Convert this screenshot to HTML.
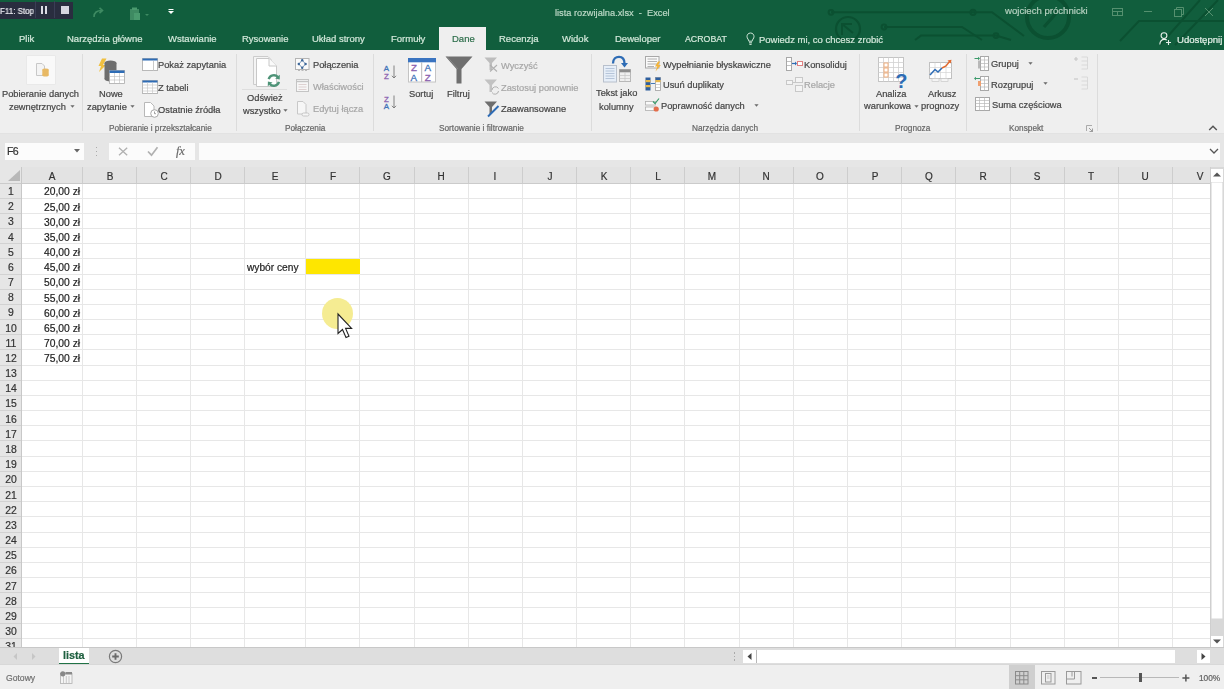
<!DOCTYPE html><html><head><meta charset="utf-8"><style>
html,body{margin:0;padding:0;}
body{width:1224px;height:689px;overflow:hidden;position:relative;background:#fff;font-family:"Liberation Sans", sans-serif;}
.t{position:absolute;white-space:nowrap;line-height:1;will-change:transform;-webkit-text-stroke:0.2px currentColor;}
.r{position:absolute;}
svg{position:absolute;overflow:visible;}
</style></head><body>
<div class="r" style="left:0px;top:0px;width:1224px;height:50px;background:#115e3d;"></div>
<svg style="left:0;top:0" width="1224" height="50" viewBox="0 0 1224 50">
<g stroke="#0b5031" stroke-width="2" fill="none">
<path d="M831 12.3 H992 L1024 36"/><circle cx="831" cy="12.3" r="2.4"/><circle cx="973" cy="12.3" r="2.6"/>
<path d="M884 27 H962 L982 40"/><circle cx="884" cy="27" r="2.4"/>
<path d="M915 40 L921 35.6 H996 L1011 40"/><circle cx="996" cy="35.6" r="2.4"/>
<circle cx="848" cy="29" r="12" stroke-width="2.2"/>
<path d="M842 35 V24 H852 M842 24 L853 33" stroke-width="2"/>
<circle cx="1048" cy="17" r="21" stroke-width="4"/>
<path d="M1037 11 H1058 L1044 27" stroke-width="3.2"/>
<path d="M1120 41 L1139 21 H1224"/>
<path d="M1218 0 L1175 45"/><path d="M1200 0 L1160 45"/>
</g></svg>
<div class="r" style="left:0px;top:1.5px;width:73px;height:17.5px;background:#292d3f;"></div>
<div class="r" style="left:35px;top:1px;width:1px;height:17px;background:#3a3f55;"></div>
<div class="r" style="left:54px;top:1px;width:1px;height:17px;background:#3a3f55;"></div>
<div class="t" style="left:-0.5px;top:6.72px;font-size:8.6px;color:#ececf2;font-weight:normal;transform:scaleX(0.93);transform-origin:0 0;">F11: Stop</div>
<div class="r" style="left:41px;top:6px;width:2.2px;height:7.5px;background:#dcdce6;"></div>
<div class="r" style="left:45px;top:6px;width:2.2px;height:7.5px;background:#dcdce6;"></div>
<div class="r" style="left:61px;top:6px;width:7.5px;height:7.5px;background:#d6d6e0;"></div>
<svg style="left:92px;top:7px" width="14" height="12" viewBox="0 0 14 12"><path d="M2 10 C2 5 5 3.5 10 3.5 M7.5 0.8 L10.5 3.5 L7.5 6.2" stroke="#3e8a62" stroke-width="1.6" fill="none"/></svg>
<svg style="left:129px;top:7px" width="24" height="14" viewBox="0 0 24 14"><rect x="1" y="2" width="9" height="11" fill="#3e8a62"/><rect x="5" y="6" width="6" height="7" fill="#4a9a6e"/><rect x="3" y="0.5" width="5" height="2.5" fill="#4a9a6e"/><path d="M16 7 l2 2 l2 -2" fill="#3e8a62"/></svg>
<svg style="left:167px;top:9px" width="8" height="6" viewBox="0 0 8 6"><rect x="1.5" y="0" width="5" height="1" fill="#fff"/><path d="M1 2 H7 L4 5 Z" fill="#fff"/></svg>
<div class="t" style="left:554.5px;top:9.17px;font-size:9.25px;color:#bcd8c6;font-weight:normal;">lista rozwijalna.xlsx &nbsp;- &nbsp;Excel</div>
<div class="t" style="left:1005px;top:6.47px;font-size:9.6px;color:#b4d0bf;font-weight:normal;">wojciech próchnicki</div>
<svg style="left:1108px;top:6px" width="110" height="12" viewBox="0 0 110 12">
<g stroke="#55906f" stroke-width="1" fill="none">
<rect x="4.5" y="2.5" width="10" height="7"/><path d="M4.5 5.5 H14.5 M9.5 5.5 V9.5"/>
<path d="M36 5.5 H44"/>
<rect x="66.5" y="3.5" width="7" height="7"/><path d="M68.5 3.5 V1.5 H75.5 V8.5 H73.5"/>
<path d="M97 2 L105 10 M105 2 L97 10"/>
</g></svg>
<div class="t" style="left:19.3px;top:34.26px;font-size:9.5px;color:#d3e8da;font-weight:normal;">Plik</div>
<div class="t" style="left:66.5px;top:34.26px;font-size:9.5px;color:#d3e8da;font-weight:normal;">Narzędzia główne</div>
<div class="t" style="left:168px;top:34.26px;font-size:9.5px;color:#d3e8da;font-weight:normal;">Wstawianie</div>
<div class="t" style="left:241.5px;top:34.26px;font-size:9.5px;color:#d3e8da;font-weight:normal;">Rysowanie</div>
<div class="t" style="left:311.5px;top:34.26px;font-size:9.5px;color:#d3e8da;font-weight:normal;">Układ strony</div>
<div class="t" style="left:390.5px;top:34.26px;font-size:9.5px;color:#d3e8da;font-weight:normal;">Formuły</div>
<div class="t" style="left:499px;top:34.26px;font-size:9.5px;color:#d3e8da;font-weight:normal;">Recenzja</div>
<div class="t" style="left:562px;top:34.26px;font-size:9.5px;color:#d3e8da;font-weight:normal;">Widok</div>
<div class="t" style="left:614.5px;top:34.26px;font-size:9.5px;color:#d3e8da;font-weight:normal;">Deweloper</div>
<div class="t" style="left:685.4px;top:34.85px;font-size:8.8px;color:#d3e8da;font-weight:normal;">ACROBAT</div>
<div class="r" style="left:439px;top:27px;width:47px;height:24px;background:#efefef;"></div>
<div class="t" style="left:451.5px;top:34.26px;font-size:9.5px;color:#2d6e4b;font-weight:normal;">Dane</div>
<svg style="left:746px;top:32px" width="9" height="14" viewBox="0 0 9 14"><path d="M4.5 1 C2 1 1 3 1 4.6 C1 6.5 2.8 7.6 2.8 9.2 H6.2 C6.2 7.6 8 6.5 8 4.6 C8 3 7 1 4.5 1 Z M3 10.8 H6 M3.4 12.4 H5.6" stroke="#d3e8da" stroke-width="1" fill="none"/></svg>
<div class="t" style="left:759px;top:34.76px;font-size:9.5px;color:#d3e8da;font-weight:normal;">Powiedz mi, co chcesz zrobić</div>
<svg style="left:1159px;top:32px" width="13" height="13" viewBox="0 0 13 13"><circle cx="5" cy="3.6" r="2.9" stroke="#e6f0ea" stroke-width="1.1" fill="none"/><path d="M0.8 12.5 C1 9 3 7.4 5.5 7.4 C6.5 7.4 7.2 7.6 7.8 8" stroke="#e6f0ea" stroke-width="1.1" fill="none"/><path d="M9.5 8 V13 M7 10.5 H12" stroke="#e6f0ea" stroke-width="1.1"/></svg>
<div class="t" style="left:1176.7px;top:34.87px;font-size:9.6px;color:#e4f0e8;font-weight:normal;">Udostępnij</div>
<div class="r" style="left:0px;top:50px;width:1224px;height:84px;background:#efefef;"></div>
<div class="r" style="left:0px;top:133px;width:1224px;height:1px;background:#e2e2e2;"></div>
<div class="r" style="left:82px;top:54px;width:1px;height:77px;background:#dcdcdc;"></div>
<div class="r" style="left:236px;top:54px;width:1px;height:77px;background:#dcdcdc;"></div>
<div class="r" style="left:373px;top:54px;width:1px;height:77px;background:#dcdcdc;"></div>
<div class="r" style="left:591px;top:54px;width:1px;height:77px;background:#dcdcdc;"></div>
<div class="r" style="left:859px;top:54px;width:1px;height:77px;background:#dcdcdc;"></div>
<div class="r" style="left:966px;top:54px;width:1px;height:77px;background:#dcdcdc;"></div>
<div class="r" style="left:1097px;top:54px;width:1px;height:77px;background:#dcdcdc;"></div>
<div class="r" style="left:27px;top:56px;width:28px;height:28px;background:#f9f9f9;box-shadow:0 0 0 0.5px #e4e4e4"></div>
<svg style="left:36px;top:63px" width="14" height="14" viewBox="0 0 14 14">
<path d="M0.5 0.5 H6 L8.5 3 V12.5 H0.5 Z" fill="#f4f4f4" stroke="#c8c8c8"/>
<ellipse cx="9.5" cy="6.8" rx="3.2" ry="1.2" fill="#e8b964"/><rect x="6.3" y="6.8" width="6.4" height="5.5" fill="#e8b964"/><ellipse cx="9.5" cy="12.3" rx="3.2" ry="1.2" fill="#e8b964"/>
</svg>
<div class="t" style="left:2px;top:90.13px;font-size:9.3px;color:#444444;font-weight:normal;">Pobieranie danych</div>
<div class="t" style="left:9px;top:102.53px;font-size:9.3px;color:#444444;font-weight:normal;">zewnętrznych</div>
<svg style="left:70px;top:105px" width="5" height="3" viewBox="0 0 5 3"><path d="M0.4 0.2 H4.6 L2.5 2.7Z" fill="#6a6a6a"/></svg>
<svg style="left:97.5px;top:57.5px" width="28" height="28" viewBox="0 0 28 28">
<path d="M4 0.5 L8.5 0.5 L5 7 L8 7 L1 14 L3 8 L0.5 8 Z" fill="#f0c040"/>
<ellipse cx="12.5" cy="5" rx="6" ry="2.4" fill="#6e6e6e"/><rect x="6.5" y="5" width="12" height="16" fill="#6e6e6e"/><ellipse cx="12.5" cy="21" rx="6" ry="2.4" fill="#6e6e6e"/>
<rect x="11.5" y="12.5" width="15" height="13" fill="#fff" stroke="#aaa" stroke-width="0.8"/>
<rect x="11.5" y="12.5" width="15" height="2.5" fill="#2e6cb5"/>
<path d="M11.5 18.5 H26.5 M11.5 22 H26.5 M16.5 15 V25.5 M21.5 15 V25.5" stroke="#bbb" stroke-width="0.6"/>
</svg>
<div class="t" style="left:98.6px;top:90.13px;font-size:9.3px;color:#444444;font-weight:normal;">Nowe</div>
<div class="t" style="left:86.8px;top:102.63px;font-size:9.3px;color:#444444;font-weight:normal;">zapytanie</div>
<svg style="left:130px;top:105px" width="5" height="3" viewBox="0 0 5 3"><path d="M0.4 0.2 H4.6 L2.5 2.7Z" fill="#6a6a6a"/></svg>
<svg style="left:141.5px;top:58px" width="16" height="14" viewBox="0 0 16 14">
<rect x="0.5" y="0.5" width="15" height="12" fill="#fff" stroke="#b8b8b8"/><rect x="0.5" y="0.5" width="15" height="2" fill="#2e6cb5"/><path d="M11.5 3 V12.5" stroke="#c8c8c8"/>
</svg>
<div class="t" style="left:158.4px;top:61.43px;font-size:9.3px;color:#444444;font-weight:normal;">Pokaż zapytania</div>
<svg style="left:141.5px;top:79.5px" width="16" height="14" viewBox="0 0 16 14">
<rect x="0.5" y="0.5" width="15" height="13" fill="#fff" stroke="#b8b8b8"/><rect x="0.5" y="0.5" width="15" height="2" fill="#2e6cb5"/>
<path d="M0.5 5 H15.5 M0.5 8 H15.5 M0.5 11 H15.5 M5.5 2.5 V13.5 M10.5 2.5 V13.5" stroke="#c8c8c8" stroke-width="0.7"/>
</svg>
<div class="t" style="left:158.4px;top:84.13px;font-size:9.3px;color:#444444;font-weight:normal;">Z tabeli</div>
<svg style="left:143.5px;top:101.5px" width="16" height="16" viewBox="0 0 16 16">
<path d="M0.5 0.5 H6.5 L10 4 V14.5 H0.5 Z" fill="#fff" stroke="#b8b8b8"/><circle cx="10.5" cy="11.5" r="3.8" fill="#fff" stroke="#a8a8a8"/><path d="M10.5 9.5 V11.7 H12" stroke="#888" stroke-width="0.8" fill="none"/>
</svg>
<div class="t" style="left:158.4px;top:105.63px;font-size:9.3px;color:#444444;font-weight:normal;">Ostatnie źródła</div>
<div class="t" style="left:108.5px;top:124.52px;font-size:8.25px;color:#666666;font-weight:normal;">Pobieranie i przekształcanie</div>
<svg style="left:252px;top:56px" width="32" height="34" viewBox="0 0 32 34">
<path d="M1.5 0.5 H16 L19 3.5 V28.5 H1.5 Z" fill="#f4f4f4" stroke="#cccccc"/>
<path d="M4.5 2.5 H17 L24.5 10 V30.5 H4.5 Z" fill="#fff" stroke="#c8c8c8"/>
<path d="M17 2.5 V10 H24.5" fill="#fafafa" stroke="#c8c8c8"/>
<path d="M16.68 23.13 A5.3 5.3 0 0 1 25.86 21.09" stroke="#4e9377" stroke-width="2.4" fill="none"/><path d="M26.92 25.87 A5.3 5.3 0 0 1 17.74 27.91" stroke="#4e9377" stroke-width="2.4" fill="none"/><path d="M27.70 23.44 L27.85 18.76 L23.12 22.45Z" fill="#4e9377"/><path d="M15.90 25.56 L15.75 30.24 L20.48 26.55Z" fill="#4e9377"/>
</svg>
<div class="r" style="left:242px;top:89px;width:45px;height:1px;background:#dedede;"></div>
<div class="t" style="left:247px;top:94.13px;font-size:9.3px;color:#444444;font-weight:normal;">Odśwież</div>
<div class="t" style="left:242.7px;top:106.53px;font-size:9.3px;color:#444444;font-weight:normal;">wszystko</div>
<svg style="left:283px;top:109px" width="5" height="3" viewBox="0 0 5 3"><path d="M0.4 0.2 H4.6 L2.5 2.7Z" fill="#6a6a6a"/></svg>
<svg style="left:295px;top:58px" width="15" height="14" viewBox="0 0 15 14">
<rect x="0.5" y="0.5" width="13.5" height="11" fill="#fafafa" stroke="#b4b4b4"/>
<path d="M7.2 2.2 L10.6 6 L7.2 9.8 L3.8 6 Z" fill="none" stroke="#3d6799" stroke-width="0.7"/>
<circle cx="7.2" cy="2.2" r="1.2" fill="#3d6799"/><circle cx="10.6" cy="6" r="1.2" fill="#3d6799"/><circle cx="7.2" cy="9.8" r="1.2" fill="#3d6799"/><circle cx="3.8" cy="6" r="1.2" fill="#3d6799"/>
<path d="M3 12.5 H5 M6.5 12.5 H8.5 M10 12.5 H12" stroke="#aaa" stroke-width="0.8"/>
</svg>
<div class="t" style="left:312.6px;top:61.43px;font-size:9.3px;color:#444444;font-weight:normal;">Połączenia</div>
<svg style="left:296px;top:79px" width="14" height="14" viewBox="0 0 14 14">
<rect x="0.5" y="0.5" width="12" height="12" fill="#f6f6f6" stroke="#c4c4c4"/><path d="M0.5 2.5 H12.5" stroke="#c4c4c4" stroke-width="1.4"/><path d="M2.5 5.5 H10.5 M2.5 8 H10.5 M2.5 10.5 H10.5" stroke="#d8c8c8" stroke-width="0.8"/>
</svg>
<div class="t" style="left:312.6px;top:83.13px;font-size:9.3px;color:#a6a6a6;font-weight:normal;">Właściwości</div>
<svg style="left:297px;top:101px" width="14" height="16" viewBox="0 0 14 16">
<path d="M0.5 0.5 H6 L9 3.5 V13 H0.5 Z" fill="#f6f6f6" stroke="#c8c8c8"/><rect x="5" y="12" width="7" height="3" rx="1.5" fill="#f6f6f6" stroke="#bbb" stroke-width="0.8"/>
</svg>
<div class="t" style="left:312.6px;top:105.13px;font-size:9.3px;color:#a6a6a6;font-weight:normal;">Edytuj łącza</div>
<div class="t" style="left:285px;top:124.52px;font-size:8.25px;color:#666666;font-weight:normal;">Połączenia</div>
<svg style="left:383px;top:64px" width="16" height="46" viewBox="0 0 16 46">
<g font-family="Liberation Sans" font-size="7.9" stroke-width="0.3">
<text x="0.8" y="7.4" fill="#3f73b8" stroke="#3f73b8">A</text>
<text x="1" y="14.6" fill="#8b5fb0" stroke="#8b5fb0">Z</text>
<text x="1" y="37.6" fill="#8b5fb0" stroke="#8b5fb0">Z</text>
<text x="0.8" y="44.8" fill="#3f73b8" stroke="#3f73b8">A</text>
</g>
<path d="M11 1.5 V14 M8.9 11.8 L11 14 L13.1 11.8" stroke="#777" stroke-width="0.9" fill="none"/>
<path d="M11 31.5 V44 M8.9 41.8 L11 44 L13.1 41.8" stroke="#777" stroke-width="0.9" fill="none"/>
</svg>
<svg style="left:408px;top:58px" width="28" height="25" viewBox="0 0 28 25">
<rect x="0.5" y="0.5" width="27" height="23.5" fill="#fff" stroke="#c4c4c4"/><rect x="0" y="0" width="28" height="4.3" fill="#3a74c0"/><path d="M13.7 4.3 V24" stroke="#b8b8b8"/>
<g font-family="Liberation Sans" font-size="9.8" stroke-width="0.3">
<text x="3" y="13.3" fill="#8b5fb0" stroke="#8b5fb0">Z</text><text x="2.6" y="22.6" fill="#3f73b8" stroke="#3f73b8">A</text>
<text x="16.4" y="13.3" fill="#3f73b8" stroke="#3f73b8">A</text><text x="16.8" y="22.6" fill="#8b5fb0" stroke="#8b5fb0">Z</text>
</g>
</svg>
<div class="t" style="left:409px;top:90.13px;font-size:9.3px;color:#444444;font-weight:normal;">Sortuj</div>
<svg style="left:445px;top:56px" width="28" height="28" viewBox="0 0 28 28">
<path d="M0.5 0.5 H27.5 L16.5 13 V27.5 H11.5 V13 Z" fill="#6f6f6f"/><path d="M2 0.5 L13 13" stroke="#8a8a8a" stroke-width="0.8"/>
</svg>
<div class="t" style="left:447.4px;top:90.13px;font-size:9.3px;color:#444444;font-weight:normal;">Filtruj</div>
<svg style="left:484px;top:57px" width="15" height="15" viewBox="0 0 15 15">
<path d="M0.5 0.5 H13 L8 6 V13 H5.5 V6 Z" fill="#bdbdbd"/><path d="M6 8 L13 14.5 M13 8 L6 14.5" stroke="#b0b0b0" stroke-width="1.1"/>
</svg>
<div class="t" style="left:500.6px;top:61.93px;font-size:9.3px;color:#a6a6a6;font-weight:normal;">Wyczyść</div>
<svg style="left:484px;top:79px" width="16" height="16" viewBox="0 0 16 16">
<path d="M0.5 0.5 H13 L8 6 V13 H5.5 V6 Z" fill="#c2c2c2"/><path d="M8 11 A3.5 3.5 0 0 1 14.5 9.5 M14.5 12 A3.5 3.5 0 0 1 8 13.5" stroke="#b0b0b0" stroke-width="1" fill="none"/>
</svg>
<div class="t" style="left:500.6px;top:84.13px;font-size:9.3px;color:#a6a6a6;font-weight:normal;">Zastosuj ponownie</div>
<svg style="left:484px;top:101px" width="16" height="16" viewBox="0 0 16 16">
<path d="M0.5 0.5 H13 L8 6 V13 H5.5 V6 Z" fill="#6e6e6e"/><path d="M4 15.5 L14.5 5" stroke="#2e6cb5" stroke-width="2"/>
</svg>
<div class="t" style="left:500.6px;top:105.13px;font-size:9.3px;color:#444444;font-weight:normal;">Zaawansowane</div>
<div class="t" style="left:438.6px;top:124.72px;font-size:8.25px;color:#666666;font-weight:normal;">Sortowanie i filtrowanie</div>
<svg style="left:602px;top:55px" width="30" height="28" viewBox="0 0 30 28">
<path d="M11 8.5 C11 3.5 14 1.8 17 1.8 C20.5 1.8 22.5 4 22.5 8.5" stroke="#2e6cb5" stroke-width="2.3" fill="none"/><path d="M19 8 L22.5 12.5 L26 8 Z" fill="#2e6cb5"/>
<rect x="1.5" y="10.5" width="13" height="16.5" fill="#e6eef8" stroke="#b8c0cc"/><path d="M3.5 13.5 H12.5 M3.5 16 H12.5 M3.5 18.5 H12.5 M3.5 21 H12.5 M3.5 23.5 H12.5" stroke="#9fb2cc" stroke-width="0.7"/>
<rect x="17.5" y="14.5" width="11" height="12" fill="#efefef" stroke="#b8b8b8"/><rect x="17.5" y="14.5" width="11" height="2.8" fill="#8c8c8c"/><path d="M17.5 20.5 H28.5 M17.5 23.5 H28.5 M23 17.3 V26.5" stroke="#c4c4c4" stroke-width="0.7"/>
</svg>
<div class="t" style="left:595.8px;top:89.13px;font-size:9.3px;color:#444444;font-weight:normal;">Tekst jako</div>
<div class="t" style="left:598.5px;top:102.73px;font-size:9.3px;color:#444444;font-weight:normal;">kolumny</div>
<svg style="left:645px;top:56px" width="17" height="16" viewBox="0 0 17 16">
<rect x="0.5" y="0.5" width="13.5" height="11.5" fill="#fafafa" stroke="#a8a8a8"/><path d="M2.5 3 H12 M2.5 5.5 H12 M2.5 8 H12 M2.5 10.5 H9" stroke="#a0a0a0" stroke-width="0.8"/>
<path d="M13 5.5 L10 10.5 H12.3 L10.5 15.5 L15.8 9 H13.3 L15.2 5.5 Z" fill="#f2b33a"/>
</svg>
<div class="t" style="left:662.5px;top:60.63px;font-size:9.3px;color:#444444;font-weight:normal;">Wypełnianie błyskawiczne</div>
<svg style="left:645px;top:77px" width="17" height="15" viewBox="0 0 17 15">
<rect x="0.5" y="0.5" width="5" height="13" fill="#2e5f9e"/><rect x="0.5" y="3" width="5" height="2.2" fill="#e8b84a"/><rect x="0.5" y="8" width="5" height="2.2" fill="#e8b84a"/>
<rect x="10.5" y="0.5" width="5" height="13" fill="#fff" stroke="#a0a0a0" stroke-width="0.8"/><rect x="10.5" y="0.5" width="5" height="2.5" fill="#2e5f9e"/><rect x="10.5" y="3" width="5" height="2.2" fill="#e8b84a"/>
<path d="M10.5 7.5 H15.5 M10.5 10.5 H15.5" stroke="#b0b0b0" stroke-width="0.6"/>
<path d="M6 6.5 H10" stroke="#2e6cb5" stroke-width="0.9"/>
</svg>
<div class="t" style="left:662.5px;top:81.33px;font-size:9.3px;color:#444444;font-weight:normal;">Usuń duplikaty</div>
<svg style="left:645px;top:98px" width="16" height="14" viewBox="0 0 16 14">
<rect x="0.5" y="3.5" width="10" height="3.5" fill="#fafafa" stroke="#b0b0b0" stroke-width="0.8"/><rect x="0.5" y="9" width="10" height="3.5" fill="#fafafa" stroke="#b0b0b0" stroke-width="0.8"/>
<path d="M8 3.5 L10 5.5 L14 0.5" stroke="#3a9a6a" stroke-width="1.2" fill="none"/><circle cx="11.2" cy="11" r="2.6" fill="#e36d4b"/>
</svg>
<div class="t" style="left:661.4px;top:102.03px;font-size:9.3px;color:#444444;font-weight:normal;">Poprawność danych</div>
<svg style="left:754px;top:104px" width="5" height="3" viewBox="0 0 5 3"><path d="M0.4 0.2 H4.6 L2.5 2.7Z" fill="#6a6a6a"/></svg>
<svg style="left:786px;top:57px" width="17" height="14" viewBox="0 0 17 14">
<rect x="0.5" y="0.5" width="5" height="13" fill="#fff" stroke="#a8a8a8"/><path d="M0.5 4.5 H5.5 M0.5 8.5 H5.5" stroke="#a8a8a8" stroke-width="0.7"/>
<path d="M6 6.5 H10" stroke="#2e6cb5" stroke-width="1.2"/><path d="M9 4.5 L11 6.5 L9 8.5" fill="#2e6cb5"/><rect x="11.5" y="4.5" width="5" height="4" fill="#fff" stroke="#e08080"/>
</svg>
<div class="t" style="left:804px;top:60.63px;font-size:9.3px;color:#444444;font-weight:normal;">Konsoliduj</div>
<svg style="left:786px;top:77px" width="17" height="15" viewBox="0 0 17 15">
<rect x="0.5" y="3.5" width="6" height="4" fill="#f4f4f4" stroke="#c8c8c8"/><rect x="9.5" y="0.5" width="7" height="5" fill="#f4f4f4" stroke="#c8c8c8"/><rect x="9.5" y="8.5" width="7" height="6" fill="#f4f4f4" stroke="#c8c8c8"/><path d="M6.5 5.5 H9.5" stroke="#c8c8c8"/>
</svg>
<div class="t" style="left:804px;top:81.33px;font-size:9.3px;color:#a6a6a6;font-weight:normal;">Relacje</div>
<div class="t" style="left:691.7px;top:124.92px;font-size:8.25px;color:#666666;font-weight:normal;">Narzędzia danych</div>
<svg style="left:878px;top:56.5px" width="32" height="32" viewBox="0 0 32 32">
<rect x="0.5" y="0.5" width="25" height="24" fill="#fff" stroke="#c4c4c4"/>
<path d="M0.5 5.5 H25.5 M0.5 10.5 H25.5 M0.5 15.5 H25.5 M0.5 20.5 H25.5 M5.5 0.5 V24.5 M10.5 0.5 V24.5 M15.5 0.5 V24.5 M20.5 0.5 V24.5" stroke="#d0d0d0" stroke-width="0.8"/>
<rect x="6" y="6" width="4" height="4" fill="none" stroke="#f0b080"/><rect x="6" y="11" width="4" height="4" fill="none" stroke="#f0b080"/><rect x="6" y="16" width="4" height="4" fill="none" stroke="#f0b080"/>
<text x="17.3" y="30.5" font-family="Liberation Sans" font-size="20" font-weight="bold" fill="#2e6cb5">?</text>
</svg>
<div class="t" style="left:876px;top:90.13px;font-size:9.3px;color:#444444;font-weight:normal;">Analiza</div>
<div class="t" style="left:864px;top:102.13px;font-size:9.3px;color:#444444;font-weight:normal;">warunkowa</div>
<svg style="left:914px;top:105px" width="5" height="3" viewBox="0 0 5 3"><path d="M0.4 0.2 H4.6 L2.5 2.7Z" fill="#6a6a6a"/></svg>
<svg style="left:929px;top:59px" width="25" height="23" viewBox="0 0 25 23">
<rect x="0.5" y="3.5" width="22" height="16" fill="#fff" stroke="#c0c0c0"/>
<path d="M0.5 8.5 H22.5 M0.5 13.5 H22.5 M6 3.5 V19.5 M11.5 3.5 V19.5 M17 3.5 V19.5" stroke="#d4d4d4" stroke-width="0.7"/>
<path d="M1 16 L6 10.5 L9 13 L13 9" stroke="#2e6cb5" stroke-width="1.5" fill="none"/><path d="M13 9 L17 7 L21 2" stroke="#e06a30" stroke-width="1.5" fill="none"/><path d="M18.5 1.5 L22.5 0.8 L21.8 4.5 Z" fill="#e06a30"/>
<rect x="3" y="19.5" width="7" height="3" fill="#f4f4f4" stroke="#c4c4c4" stroke-width="0.6"/><rect x="12" y="19.5" width="7" height="3" fill="#f4f4f4" stroke="#c4c4c4" stroke-width="0.6"/>
</svg>
<div class="t" style="left:927.6px;top:90.13px;font-size:9.3px;color:#444444;font-weight:normal;">Arkusz</div>
<div class="t" style="left:921px;top:102.13px;font-size:9.3px;color:#444444;font-weight:normal;">prognozy</div>
<div class="t" style="left:895px;top:124.62px;font-size:8.25px;color:#666666;font-weight:normal;">Prognoza</div>
<svg style="left:974px;top:56px" width="16" height="15" viewBox="0 0 16 15">
<path d="M0.5 2.5 H5" stroke="#3a9a6a" stroke-width="1"/><path d="M4 0.8 L6 2.5 L4 4.2Z" fill="#3a9a6a"/>
<rect x="6.5" y="0.5" width="8" height="14" fill="#fff" stroke="#a8a8a8"/><path d="M6.5 4 H14.5 M6.5 7.5 H14.5 M6.5 11 H14.5 M10.5 0.5 V14.5" stroke="#b8b8b8" stroke-width="0.7"/><rect x="4" y="4.5" width="2" height="8" fill="#b8b8b8"/>
</svg>
<div class="t" style="left:990.8px;top:60.43px;font-size:9.3px;color:#444444;font-weight:normal;">Grupuj</div>
<svg style="left:1028px;top:62px" width="5" height="3" viewBox="0 0 5 3"><path d="M0.4 0.2 H4.6 L2.5 2.7Z" fill="#6a6a6a"/></svg>
<svg style="left:974px;top:76px" width="16" height="15" viewBox="0 0 16 15">
<path d="M1 2.5 H6" stroke="#3a9a6a" stroke-width="1"/><path d="M2 0.8 L0 2.5 L2 4.2Z" fill="#3a9a6a"/>
<rect x="6.5" y="0.5" width="8" height="14" fill="#fff" stroke="#a8a8a8"/><path d="M6.5 4 H14.5 M6.5 7.5 H14.5 M6.5 11 H14.5 M10.5 0.5 V14.5" stroke="#b8b8b8" stroke-width="0.7"/><rect x="4" y="5" width="3" height="5" fill="#f0a070"/>
</svg>
<div class="t" style="left:990.8px;top:80.93px;font-size:9.3px;color:#444444;font-weight:normal;">Rozgrupuj</div>
<svg style="left:1043px;top:82px" width="5" height="3" viewBox="0 0 5 3"><path d="M0.4 0.2 H4.6 L2.5 2.7Z" fill="#6a6a6a"/></svg>
<svg style="left:975px;top:97px" width="16" height="15" viewBox="0 0 16 15">
<rect x="0.5" y="0.5" width="14" height="13" fill="#fff" stroke="#a8a8a8"/><path d="M0.5 3.5 H14.5 M0.5 6.5 H14.5 M0.5 9.5 H14.5 M4.5 0.5 V13.5 M9.5 0.5 V13.5" stroke="#b8b8b8" stroke-width="0.7"/>
</svg>
<div class="t" style="left:992.4px;top:101.13px;font-size:9.3px;color:#444444;font-weight:normal;">Suma częściowa</div>
<svg style="left:1073px;top:56px" width="16" height="36" viewBox="0 0 16 36">
<path d="M1 3 H5 M3 1 V5" stroke="#c8c8c8" stroke-width="1.2"/><path d="M8.5 1 H14.5 V13 H8.5 M8.5 5 H14.5 M8.5 9 H14.5" stroke="#d4d4d4" stroke-width="0.8" fill="none"/>
<path d="M1 23 H5" stroke="#c8c8c8" stroke-width="1.2"/><path d="M8.5 21 H14.5 V33 H8.5 M8.5 25 H14.5 M8.5 29 H14.5" stroke="#d4d4d4" stroke-width="0.8" fill="none"/>
</svg>
<div class="t" style="left:1008.8px;top:124.62px;font-size:8.25px;color:#666666;font-weight:normal;">Konspekt</div>
<svg style="left:1086px;top:125px" width="8" height="7" viewBox="0 0 8 7"><path d="M0.5 6 V0.5 H6" stroke="#999" stroke-width="0.8" fill="none"/><path d="M3 3 L6.5 6.5 M6.5 3.5 V6.5 H3.5" stroke="#888" stroke-width="0.8" fill="none"/></svg>
<svg style="left:1208px;top:125px" width="10" height="6" viewBox="0 0 10 6"><path d="M1.2 5 L5 1.3 L8.8 5" stroke="#555" stroke-width="1.5" fill="none"/></svg>
<div class="r" style="left:0px;top:134px;width:1224px;height:33px;background:#e6e6e6;"></div>
<div class="r" style="left:5px;top:143px;width:79px;height:17px;background:#fcfcfc;"></div>
<div class="t" style="left:7.4px;top:146.43px;font-size:10.6px;color:#333;font-weight:normal;letter-spacing:-0.6px;">F6</div>
<svg style="left:74px;top:149px" width="6" height="4" viewBox="0 0 6 4"><path d="M0 0 H6 L3 3.5Z" fill="#666"/></svg>
<div class="r" style="left:96px;top:146.5px;width:1.3px;height:1.6px;background:#aaa;"></div>
<div class="r" style="left:96px;top:150.5px;width:1.3px;height:1.6px;background:#aaa;"></div>
<div class="r" style="left:96px;top:154.5px;width:1.3px;height:1.6px;background:#aaa;"></div>
<div class="r" style="left:109px;top:143px;width:86px;height:17px;background:#fbfbfb;"></div>
<svg style="left:118px;top:146px" width="70" height="12" viewBox="0 0 70 12"><path d="M1 1.8 L9.2 9.2 M9.2 1.8 L1 9.2" stroke="#b0b0b0" stroke-width="1.3"/><path d="M30 5.5 L33.5 9.2 L39.5 1.3" stroke="#b0b0b0" stroke-width="1.7" fill="none"/></svg>
<div class="t" style="left:175.5px;top:144.72px;font-size:12.5px;color:#6a6a6a;font-weight:normal;font-family:'Liberation Serif',serif;letter-spacing:-0.3px;"><i>fx</i></div>
<div class="r" style="left:199px;top:143px;width:1021px;height:17px;background:#fbfbfb;"></div>
<svg style="left:1209px;top:148px" width="10" height="6" viewBox="0 0 10 6"><path d="M1 1 L5 5 L9 1" stroke="#555" stroke-width="1.3" fill="none"/></svg>
<div class="r" style="left:0px;top:166.5px;width:1210px;height:16.5px;background:#e3e3e3;"></div>
<div class="r" style="left:0px;top:166.5px;width:21.5px;height:481px;background:#e6e6e6;"></div>
<svg style="left:8px;top:170px" width="13" height="12" viewBox="0 0 13 12"><path d="M12 0 V11 H0 Z" fill="#b8b8b8"/></svg>
<div class="r" style="left:21.5px;top:183px;width:1188.5px;height:464.5px;background:#fff;"></div>
<div class="r" style="left:21.5px;top:198px;width:1188.5px;height:1px;background:#e7e7e7;"></div>
<div class="r" style="left:0px;top:198px;width:21.5px;height:1px;background:#d2d2d2;"></div>
<div class="r" style="left:21.5px;top:213px;width:1188.5px;height:1px;background:#e7e7e7;"></div>
<div class="r" style="left:0px;top:213px;width:21.5px;height:1px;background:#d2d2d2;"></div>
<div class="r" style="left:21.5px;top:228px;width:1188.5px;height:1px;background:#e7e7e7;"></div>
<div class="r" style="left:0px;top:228px;width:21.5px;height:1px;background:#d2d2d2;"></div>
<div class="r" style="left:21.5px;top:243px;width:1188.5px;height:1px;background:#e7e7e7;"></div>
<div class="r" style="left:0px;top:243px;width:21.5px;height:1px;background:#d2d2d2;"></div>
<div class="r" style="left:21.5px;top:258px;width:1188.5px;height:1px;background:#e7e7e7;"></div>
<div class="r" style="left:0px;top:258px;width:21.5px;height:1px;background:#d2d2d2;"></div>
<div class="r" style="left:21.5px;top:274px;width:1188.5px;height:1px;background:#e7e7e7;"></div>
<div class="r" style="left:0px;top:274px;width:21.5px;height:1px;background:#d2d2d2;"></div>
<div class="r" style="left:21.5px;top:289px;width:1188.5px;height:1px;background:#e7e7e7;"></div>
<div class="r" style="left:0px;top:289px;width:21.5px;height:1px;background:#d2d2d2;"></div>
<div class="r" style="left:21.5px;top:304px;width:1188.5px;height:1px;background:#e7e7e7;"></div>
<div class="r" style="left:0px;top:304px;width:21.5px;height:1px;background:#d2d2d2;"></div>
<div class="r" style="left:21.5px;top:319px;width:1188.5px;height:1px;background:#e7e7e7;"></div>
<div class="r" style="left:0px;top:319px;width:21.5px;height:1px;background:#d2d2d2;"></div>
<div class="r" style="left:21.5px;top:334px;width:1188.5px;height:1px;background:#e7e7e7;"></div>
<div class="r" style="left:0px;top:334px;width:21.5px;height:1px;background:#d2d2d2;"></div>
<div class="r" style="left:21.5px;top:349px;width:1188.5px;height:1px;background:#e7e7e7;"></div>
<div class="r" style="left:0px;top:349px;width:21.5px;height:1px;background:#d2d2d2;"></div>
<div class="r" style="left:21.5px;top:365px;width:1188.5px;height:1px;background:#e7e7e7;"></div>
<div class="r" style="left:0px;top:365px;width:21.5px;height:1px;background:#d2d2d2;"></div>
<div class="r" style="left:21.5px;top:380px;width:1188.5px;height:1px;background:#e7e7e7;"></div>
<div class="r" style="left:0px;top:380px;width:21.5px;height:1px;background:#d2d2d2;"></div>
<div class="r" style="left:21.5px;top:395px;width:1188.5px;height:1px;background:#e7e7e7;"></div>
<div class="r" style="left:0px;top:395px;width:21.5px;height:1px;background:#d2d2d2;"></div>
<div class="r" style="left:21.5px;top:410px;width:1188.5px;height:1px;background:#e7e7e7;"></div>
<div class="r" style="left:0px;top:410px;width:21.5px;height:1px;background:#d2d2d2;"></div>
<div class="r" style="left:21.5px;top:425px;width:1188.5px;height:1px;background:#e7e7e7;"></div>
<div class="r" style="left:0px;top:425px;width:21.5px;height:1px;background:#d2d2d2;"></div>
<div class="r" style="left:21.5px;top:440px;width:1188.5px;height:1px;background:#e7e7e7;"></div>
<div class="r" style="left:0px;top:440px;width:21.5px;height:1px;background:#d2d2d2;"></div>
<div class="r" style="left:21.5px;top:456px;width:1188.5px;height:1px;background:#e7e7e7;"></div>
<div class="r" style="left:0px;top:456px;width:21.5px;height:1px;background:#d2d2d2;"></div>
<div class="r" style="left:21.5px;top:471px;width:1188.5px;height:1px;background:#e7e7e7;"></div>
<div class="r" style="left:0px;top:471px;width:21.5px;height:1px;background:#d2d2d2;"></div>
<div class="r" style="left:21.5px;top:486px;width:1188.5px;height:1px;background:#e7e7e7;"></div>
<div class="r" style="left:0px;top:486px;width:21.5px;height:1px;background:#d2d2d2;"></div>
<div class="r" style="left:21.5px;top:501px;width:1188.5px;height:1px;background:#e7e7e7;"></div>
<div class="r" style="left:0px;top:501px;width:21.5px;height:1px;background:#d2d2d2;"></div>
<div class="r" style="left:21.5px;top:516px;width:1188.5px;height:1px;background:#e7e7e7;"></div>
<div class="r" style="left:0px;top:516px;width:21.5px;height:1px;background:#d2d2d2;"></div>
<div class="r" style="left:21.5px;top:532px;width:1188.5px;height:1px;background:#e7e7e7;"></div>
<div class="r" style="left:0px;top:532px;width:21.5px;height:1px;background:#d2d2d2;"></div>
<div class="r" style="left:21.5px;top:547px;width:1188.5px;height:1px;background:#e7e7e7;"></div>
<div class="r" style="left:0px;top:547px;width:21.5px;height:1px;background:#d2d2d2;"></div>
<div class="r" style="left:21.5px;top:562px;width:1188.5px;height:1px;background:#e7e7e7;"></div>
<div class="r" style="left:0px;top:562px;width:21.5px;height:1px;background:#d2d2d2;"></div>
<div class="r" style="left:21.5px;top:577px;width:1188.5px;height:1px;background:#e7e7e7;"></div>
<div class="r" style="left:0px;top:577px;width:21.5px;height:1px;background:#d2d2d2;"></div>
<div class="r" style="left:21.5px;top:592px;width:1188.5px;height:1px;background:#e7e7e7;"></div>
<div class="r" style="left:0px;top:592px;width:21.5px;height:1px;background:#d2d2d2;"></div>
<div class="r" style="left:21.5px;top:607px;width:1188.5px;height:1px;background:#e7e7e7;"></div>
<div class="r" style="left:0px;top:607px;width:21.5px;height:1px;background:#d2d2d2;"></div>
<div class="r" style="left:21.5px;top:623px;width:1188.5px;height:1px;background:#e7e7e7;"></div>
<div class="r" style="left:0px;top:623px;width:21.5px;height:1px;background:#d2d2d2;"></div>
<div class="r" style="left:21.5px;top:638px;width:1188.5px;height:1px;background:#e7e7e7;"></div>
<div class="r" style="left:0px;top:638px;width:21.5px;height:1px;background:#d2d2d2;"></div>
<div class="r" style="left:82px;top:183px;width:1px;height:464px;background:#e7e7e7;"></div>
<div class="r" style="left:82px;top:166.5px;width:1px;height:16.5px;background:#cdcdcd;"></div>
<div class="r" style="left:136px;top:183px;width:1px;height:464px;background:#e7e7e7;"></div>
<div class="r" style="left:136px;top:166.5px;width:1px;height:16.5px;background:#cdcdcd;"></div>
<div class="r" style="left:190px;top:183px;width:1px;height:464px;background:#e7e7e7;"></div>
<div class="r" style="left:190px;top:166.5px;width:1px;height:16.5px;background:#cdcdcd;"></div>
<div class="r" style="left:244px;top:183px;width:1px;height:464px;background:#e7e7e7;"></div>
<div class="r" style="left:244px;top:166.5px;width:1px;height:16.5px;background:#cdcdcd;"></div>
<div class="r" style="left:305px;top:183px;width:1px;height:464px;background:#e7e7e7;"></div>
<div class="r" style="left:305px;top:166.5px;width:1px;height:16.5px;background:#cdcdcd;"></div>
<div class="r" style="left:359px;top:183px;width:1px;height:464px;background:#e7e7e7;"></div>
<div class="r" style="left:359px;top:166.5px;width:1px;height:16.5px;background:#cdcdcd;"></div>
<div class="r" style="left:414px;top:183px;width:1px;height:464px;background:#e7e7e7;"></div>
<div class="r" style="left:414px;top:166.5px;width:1px;height:16.5px;background:#cdcdcd;"></div>
<div class="r" style="left:468px;top:183px;width:1px;height:464px;background:#e7e7e7;"></div>
<div class="r" style="left:468px;top:166.5px;width:1px;height:16.5px;background:#cdcdcd;"></div>
<div class="r" style="left:522px;top:183px;width:1px;height:464px;background:#e7e7e7;"></div>
<div class="r" style="left:522px;top:166.5px;width:1px;height:16.5px;background:#cdcdcd;"></div>
<div class="r" style="left:576px;top:183px;width:1px;height:464px;background:#e7e7e7;"></div>
<div class="r" style="left:576px;top:166.5px;width:1px;height:16.5px;background:#cdcdcd;"></div>
<div class="r" style="left:630px;top:183px;width:1px;height:464px;background:#e7e7e7;"></div>
<div class="r" style="left:630px;top:166.5px;width:1px;height:16.5px;background:#cdcdcd;"></div>
<div class="r" style="left:684px;top:183px;width:1px;height:464px;background:#e7e7e7;"></div>
<div class="r" style="left:684px;top:166.5px;width:1px;height:16.5px;background:#cdcdcd;"></div>
<div class="r" style="left:739px;top:183px;width:1px;height:464px;background:#e7e7e7;"></div>
<div class="r" style="left:739px;top:166.5px;width:1px;height:16.5px;background:#cdcdcd;"></div>
<div class="r" style="left:793px;top:183px;width:1px;height:464px;background:#e7e7e7;"></div>
<div class="r" style="left:793px;top:166.5px;width:1px;height:16.5px;background:#cdcdcd;"></div>
<div class="r" style="left:847px;top:183px;width:1px;height:464px;background:#e7e7e7;"></div>
<div class="r" style="left:847px;top:166.5px;width:1px;height:16.5px;background:#cdcdcd;"></div>
<div class="r" style="left:901px;top:183px;width:1px;height:464px;background:#e7e7e7;"></div>
<div class="r" style="left:901px;top:166.5px;width:1px;height:16.5px;background:#cdcdcd;"></div>
<div class="r" style="left:955px;top:183px;width:1px;height:464px;background:#e7e7e7;"></div>
<div class="r" style="left:955px;top:166.5px;width:1px;height:16.5px;background:#cdcdcd;"></div>
<div class="r" style="left:1010px;top:183px;width:1px;height:464px;background:#e7e7e7;"></div>
<div class="r" style="left:1010px;top:166.5px;width:1px;height:16.5px;background:#cdcdcd;"></div>
<div class="r" style="left:1064px;top:183px;width:1px;height:464px;background:#e7e7e7;"></div>
<div class="r" style="left:1064px;top:166.5px;width:1px;height:16.5px;background:#cdcdcd;"></div>
<div class="r" style="left:1118px;top:183px;width:1px;height:464px;background:#e7e7e7;"></div>
<div class="r" style="left:1118px;top:166.5px;width:1px;height:16.5px;background:#cdcdcd;"></div>
<div class="r" style="left:1172px;top:183px;width:1px;height:464px;background:#e7e7e7;"></div>
<div class="r" style="left:1172px;top:166.5px;width:1px;height:16.5px;background:#cdcdcd;"></div>
<div class="r" style="left:0px;top:182.5px;width:1210px;height:1px;background:#cbcbcb;"></div>
<div class="r" style="left:21px;top:166.5px;width:1px;height:481px;background:#c8c8c8;"></div>
<div class="t" style="left:-148.0px;width:400px;text-align:center;top:172.24px;font-size:10px;color:#333;font-weight:normal;">A</div>
<div class="t" style="left:-90.45px;width:400px;text-align:center;top:172.24px;font-size:10px;color:#333;font-weight:normal;">B</div>
<div class="t" style="left:-36.35000000000002px;width:400px;text-align:center;top:172.24px;font-size:10px;color:#333;font-weight:normal;">C</div>
<div class="t" style="left:17.75px;width:400px;text-align:center;top:172.24px;font-size:10px;color:#333;font-weight:normal;">D</div>
<div class="t" style="left:75.30000000000001px;width:400px;text-align:center;top:172.24px;font-size:10px;color:#333;font-weight:normal;">E</div>
<div class="t" style="left:132.885px;width:400px;text-align:center;top:172.24px;font-size:10px;color:#333;font-weight:normal;">F</div>
<div class="t" style="left:187.05500000000006px;width:400px;text-align:center;top:172.24px;font-size:10px;color:#333;font-weight:normal;">G</div>
<div class="t" style="left:241.22500000000002px;width:400px;text-align:center;top:172.24px;font-size:10px;color:#333;font-weight:normal;">H</div>
<div class="t" style="left:295.39500000000004px;width:400px;text-align:center;top:172.24px;font-size:10px;color:#333;font-weight:normal;">I</div>
<div class="t" style="left:349.56500000000005px;width:400px;text-align:center;top:172.24px;font-size:10px;color:#333;font-weight:normal;">J</div>
<div class="t" style="left:403.7349999999999px;width:400px;text-align:center;top:172.24px;font-size:10px;color:#333;font-weight:normal;">K</div>
<div class="t" style="left:457.905px;width:400px;text-align:center;top:172.24px;font-size:10px;color:#333;font-weight:normal;">L</div>
<div class="t" style="left:512.0749999999998px;width:400px;text-align:center;top:172.24px;font-size:10px;color:#333;font-weight:normal;">M</div>
<div class="t" style="left:566.2449999999999px;width:400px;text-align:center;top:172.24px;font-size:10px;color:#333;font-weight:normal;">N</div>
<div class="t" style="left:620.4149999999997px;width:400px;text-align:center;top:172.24px;font-size:10px;color:#333;font-weight:normal;">O</div>
<div class="t" style="left:674.5849999999998px;width:400px;text-align:center;top:172.24px;font-size:10px;color:#333;font-weight:normal;">P</div>
<div class="t" style="left:728.7549999999997px;width:400px;text-align:center;top:172.24px;font-size:10px;color:#333;font-weight:normal;">Q</div>
<div class="t" style="left:782.9249999999997px;width:400px;text-align:center;top:172.24px;font-size:10px;color:#333;font-weight:normal;">R</div>
<div class="t" style="left:837.0949999999996px;width:400px;text-align:center;top:172.24px;font-size:10px;color:#333;font-weight:normal;">S</div>
<div class="t" style="left:891.2649999999996px;width:400px;text-align:center;top:172.24px;font-size:10px;color:#333;font-weight:normal;">T</div>
<div class="t" style="left:945.4349999999997px;width:400px;text-align:center;top:172.24px;font-size:10px;color:#333;font-weight:normal;">U</div>
<div class="t" style="left:999.6049999999998px;width:400px;text-align:center;top:172.24px;font-size:10px;color:#333;font-weight:normal;">V</div>
<div class="t" style="left:-189.2px;width:400px;text-align:center;top:187.10px;font-size:10.4px;color:#333;font-weight:normal;">1</div>
<div class="t" style="left:-189.2px;width:400px;text-align:center;top:202.27px;font-size:10.4px;color:#333;font-weight:normal;">2</div>
<div class="t" style="left:-189.2px;width:400px;text-align:center;top:217.44px;font-size:10.4px;color:#333;font-weight:normal;">3</div>
<div class="t" style="left:-189.2px;width:400px;text-align:center;top:232.61px;font-size:10.4px;color:#333;font-weight:normal;">4</div>
<div class="t" style="left:-189.2px;width:400px;text-align:center;top:247.78px;font-size:10.4px;color:#333;font-weight:normal;">5</div>
<div class="t" style="left:-189.2px;width:400px;text-align:center;top:262.95px;font-size:10.4px;color:#333;font-weight:normal;">6</div>
<div class="t" style="left:-189.2px;width:400px;text-align:center;top:278.12px;font-size:10.4px;color:#333;font-weight:normal;">7</div>
<div class="t" style="left:-189.2px;width:400px;text-align:center;top:293.29px;font-size:10.4px;color:#333;font-weight:normal;">8</div>
<div class="t" style="left:-189.2px;width:400px;text-align:center;top:308.46px;font-size:10.4px;color:#333;font-weight:normal;">9</div>
<div class="t" style="left:-189.2px;width:400px;text-align:center;top:323.63px;font-size:10.4px;color:#333;font-weight:normal;">10</div>
<div class="t" style="left:-189.2px;width:400px;text-align:center;top:338.80px;font-size:10.4px;color:#333;font-weight:normal;">11</div>
<div class="t" style="left:-189.2px;width:400px;text-align:center;top:353.97px;font-size:10.4px;color:#333;font-weight:normal;">12</div>
<div class="t" style="left:-189.2px;width:400px;text-align:center;top:369.14px;font-size:10.4px;color:#333;font-weight:normal;">13</div>
<div class="t" style="left:-189.2px;width:400px;text-align:center;top:384.31px;font-size:10.4px;color:#333;font-weight:normal;">14</div>
<div class="t" style="left:-189.2px;width:400px;text-align:center;top:399.48px;font-size:10.4px;color:#333;font-weight:normal;">15</div>
<div class="t" style="left:-189.2px;width:400px;text-align:center;top:414.65px;font-size:10.4px;color:#333;font-weight:normal;">16</div>
<div class="t" style="left:-189.2px;width:400px;text-align:center;top:429.82px;font-size:10.4px;color:#333;font-weight:normal;">17</div>
<div class="t" style="left:-189.2px;width:400px;text-align:center;top:444.99px;font-size:10.4px;color:#333;font-weight:normal;">18</div>
<div class="t" style="left:-189.2px;width:400px;text-align:center;top:460.16px;font-size:10.4px;color:#333;font-weight:normal;">19</div>
<div class="t" style="left:-189.2px;width:400px;text-align:center;top:475.33px;font-size:10.4px;color:#333;font-weight:normal;">20</div>
<div class="t" style="left:-189.2px;width:400px;text-align:center;top:490.50px;font-size:10.4px;color:#333;font-weight:normal;">21</div>
<div class="t" style="left:-189.2px;width:400px;text-align:center;top:505.67px;font-size:10.4px;color:#333;font-weight:normal;">22</div>
<div class="t" style="left:-189.2px;width:400px;text-align:center;top:520.84px;font-size:10.4px;color:#333;font-weight:normal;">23</div>
<div class="t" style="left:-189.2px;width:400px;text-align:center;top:536.01px;font-size:10.4px;color:#333;font-weight:normal;">24</div>
<div class="t" style="left:-189.2px;width:400px;text-align:center;top:551.18px;font-size:10.4px;color:#333;font-weight:normal;">25</div>
<div class="t" style="left:-189.2px;width:400px;text-align:center;top:566.35px;font-size:10.4px;color:#333;font-weight:normal;">26</div>
<div class="t" style="left:-189.2px;width:400px;text-align:center;top:581.52px;font-size:10.4px;color:#333;font-weight:normal;">27</div>
<div class="t" style="left:-189.2px;width:400px;text-align:center;top:596.69px;font-size:10.4px;color:#333;font-weight:normal;">28</div>
<div class="t" style="left:-189.2px;width:400px;text-align:center;top:611.86px;font-size:10.4px;color:#333;font-weight:normal;">29</div>
<div class="t" style="left:-189.2px;width:400px;text-align:center;top:627.03px;font-size:10.4px;color:#333;font-weight:normal;">30</div>
<div class="t" style="left:-189.2px;width:400px;text-align:center;top:642.20px;font-size:10.4px;color:#333;font-weight:normal;">31</div>
<div class="t" style="right:1143.5px;top:187.38px;font-size:10.3px;color:#222;font-weight:normal;">20,00 zł</div>
<div class="t" style="right:1143.5px;top:202.55px;font-size:10.3px;color:#222;font-weight:normal;">25,00 zł</div>
<div class="t" style="right:1143.5px;top:217.72px;font-size:10.3px;color:#222;font-weight:normal;">30,00 zł</div>
<div class="t" style="right:1143.5px;top:232.89px;font-size:10.3px;color:#222;font-weight:normal;">35,00 zł</div>
<div class="t" style="right:1143.5px;top:248.06px;font-size:10.3px;color:#222;font-weight:normal;">40,00 zł</div>
<div class="t" style="right:1143.5px;top:263.23px;font-size:10.3px;color:#222;font-weight:normal;">45,00 zł</div>
<div class="t" style="right:1143.5px;top:278.40px;font-size:10.3px;color:#222;font-weight:normal;">50,00 zł</div>
<div class="t" style="right:1143.5px;top:293.57px;font-size:10.3px;color:#222;font-weight:normal;">55,00 zł</div>
<div class="t" style="right:1143.5px;top:308.74px;font-size:10.3px;color:#222;font-weight:normal;">60,00 zł</div>
<div class="t" style="right:1143.5px;top:323.91px;font-size:10.3px;color:#222;font-weight:normal;">65,00 zł</div>
<div class="t" style="right:1143.5px;top:339.08px;font-size:10.3px;color:#222;font-weight:normal;">70,00 zł</div>
<div class="t" style="right:1143.5px;top:354.25px;font-size:10.3px;color:#222;font-weight:normal;">75,00 zł</div>
<div class="t" style="left:247px;top:263.37px;font-size:10.2px;color:#222;font-weight:normal;">wybór ceny</div>
<div class="r" style="left:305.8px;top:258.5px;width:54.5px;height:15.5px;background:#fee600;"></div>
<div class="r" style="left:322px;top:298px;width:31px;height:31px;border-radius:50%;background:#f5ec92"></div>
<svg style="left:337px;top:313px" width="18" height="27" viewBox="0 0 18 27"><path d="M1 1 V20.5 L5.5 16.5 L9 24.5 L12 23.2 L8.6 15.4 L14.6 15.4 Z" fill="#fff" stroke="#222" stroke-width="1.1" stroke-linejoin="miter"/></svg>
<div class="r" style="left:1210px;top:166.5px;width:14px;height:481px;background:#d8d8d8;"></div>
<div class="r" style="left:1210px;top:166.5px;width:1px;height:481px;background:#cfcfcf;"></div>
<div class="r" style="left:1211px;top:168.5px;width:12px;height:13px;background:#fff;"></div>
<svg style="left:1213px;top:172px" width="8" height="5" viewBox="0 0 8 5"><path d="M0 4.5 H8 L4 0.5Z" fill="#555"/></svg>
<div class="r" style="left:1211px;top:182px;width:12px;height:437px;background:#fff;box-shadow:inset 0 0 0 0.6px #d8d8d8"></div>
<div class="r" style="left:1211px;top:636px;width:12px;height:11.5px;background:#fff;"></div>
<svg style="left:1213px;top:639px" width="8" height="5" viewBox="0 0 8 5"><path d="M0 0.5 H8 L4 4.5Z" fill="#555"/></svg>
<div class="r" style="left:0px;top:647.5px;width:1224px;height:17px;background:#dedede;"></div>
<div class="r" style="left:0px;top:647px;width:1224px;height:1px;background:#c8c8c8;"></div>
<svg style="left:13px;top:653px" width="24" height="7" viewBox="0 0 24 7"><path d="M4 0 V7 L0.5 3.5Z" fill="#c6c6c6"/><path d="M19 0 V7 L22.5 3.5Z" fill="#c6c6c6"/></svg>
<div class="r" style="left:58.5px;top:647.5px;width:30.5px;height:17px;background:#fff;"></div>
<div class="r" style="left:58.5px;top:662.5px;width:30.5px;height:2px;background:#217346;"></div>
<div class="t" style="left:63.4px;top:650.46px;font-size:10.8px;color:#1e5f3f;font-weight:bold;">lista</div>
<svg style="left:107.5px;top:648.8px" width="15" height="15" viewBox="0 0 15 15"><circle cx="7.5" cy="7.5" r="6.1" fill="none" stroke="#7a7a7a" stroke-width="1.2"/><path d="M7.5 4.2 V10.8 M4.2 7.5 H10.8" stroke="#6a6a6a" stroke-width="1.9"/></svg>
<div class="r" style="left:733.5px;top:652px;width:1.3px;height:1.5px;background:#aaa;"></div>
<div class="r" style="left:733.5px;top:655.5px;width:1.3px;height:1.5px;background:#aaa;"></div>
<div class="r" style="left:733.5px;top:659px;width:1.3px;height:1.5px;background:#aaa;"></div>
<div class="r" style="left:743px;top:649.5px;width:13px;height:13px;background:#fff;"></div>
<svg style="left:747px;top:653px" width="5" height="7" viewBox="0 0 5 7"><path d="M4.5 0 V7 L0.5 3.5Z" fill="#444"/></svg>
<div class="r" style="left:756px;top:649.5px;width:1px;height:13px;background:#b8b8b8;"></div>
<div class="r" style="left:757px;top:649.5px;width:418px;height:13px;background:#fff;"></div>
<div class="r" style="left:1197px;top:649.5px;width:13px;height:13px;background:#fff;"></div>
<svg style="left:1201px;top:653px" width="5" height="7" viewBox="0 0 5 7"><path d="M0.5 0 V7 L4.5 3.5Z" fill="#444"/></svg>
<div class="r" style="left:0px;top:664.5px;width:1224px;height:25px;background:#efefef;"></div>
<div class="r" style="left:0px;top:664px;width:1224px;height:1px;background:#d8d8d8;"></div>
<div class="t" style="left:5.6px;top:673.72px;font-size:8.6px;color:#707070;font-weight:normal;">Gotowy</div>
<svg style="left:60px;top:671px" width="13" height="13" viewBox="0 0 13 13"><rect x="0.5" y="2.5" width="11.5" height="10" fill="#f4f4f4" stroke="#b0b0b0" stroke-width="0.8"/><path d="M3.5 5 V12.5 M6.3 5 V12.5 M9 5 V12.5" stroke="#b8b8b8" stroke-width="0.7"/><circle cx="2.8" cy="2.8" r="2.6" fill="#888"/><rect x="5.5" y="1" width="6.5" height="2.5" fill="#8a8a8a"/></svg>
<div class="r" style="left:1009px;top:664.5px;width:26px;height:24.5px;background:#cfcfcf;"></div>
<svg style="left:1015px;top:671px" width="14" height="14" viewBox="0 0 14 14"><rect x="0.5" y="0.5" width="12.5" height="12.5" fill="none" stroke="#8a8a8a"/><path d="M0.5 4.7 H13 M0.5 8.8 H13 M4.7 0.5 V13 M8.8 0.5 V13" stroke="#8a8a8a"/></svg>
<svg style="left:1041px;top:671px" width="15" height="14" viewBox="0 0 15 14"><rect x="0.5" y="0.5" width="13.5" height="12.5" fill="none" stroke="#9a9a9a"/><rect x="4.5" y="2.5" width="5.5" height="8.5" fill="none" stroke="#9a9a9a"/><path d="M6 5 H8.5 M6 7 H8.5" stroke="#aaa" stroke-width="0.6"/></svg>
<svg style="left:1066px;top:671px" width="16" height="14" viewBox="0 0 16 14"><rect x="0.5" y="0.5" width="14.5" height="12.5" fill="none" stroke="#9a9a9a"/><path d="M0.5 8 H8.5 V0.5 M6 0.5 V5.5" stroke="#9a9a9a" fill="none"/></svg>
<div class="r" style="left:1092px;top:677px;width:4.5px;height:1.6px;background:#555;"></div>
<div class="r" style="left:1100.4px;top:677.2px;width:78.2px;height:1px;background:#b8b8b8;"></div>
<div class="r" style="left:1138.5px;top:673px;width:3px;height:9px;background:#555;"></div>
<svg style="left:1182px;top:674px" width="8" height="8" viewBox="0 0 8 8"><path d="M3.9 0.5 V7.5 M0.4 4 H7.4" stroke="#555" stroke-width="1.5"/></svg>
<div class="t" style="left:1199.4px;top:673.67px;font-size:8.3px;color:#606060;font-weight:normal;">100%</div>
</body></html>
